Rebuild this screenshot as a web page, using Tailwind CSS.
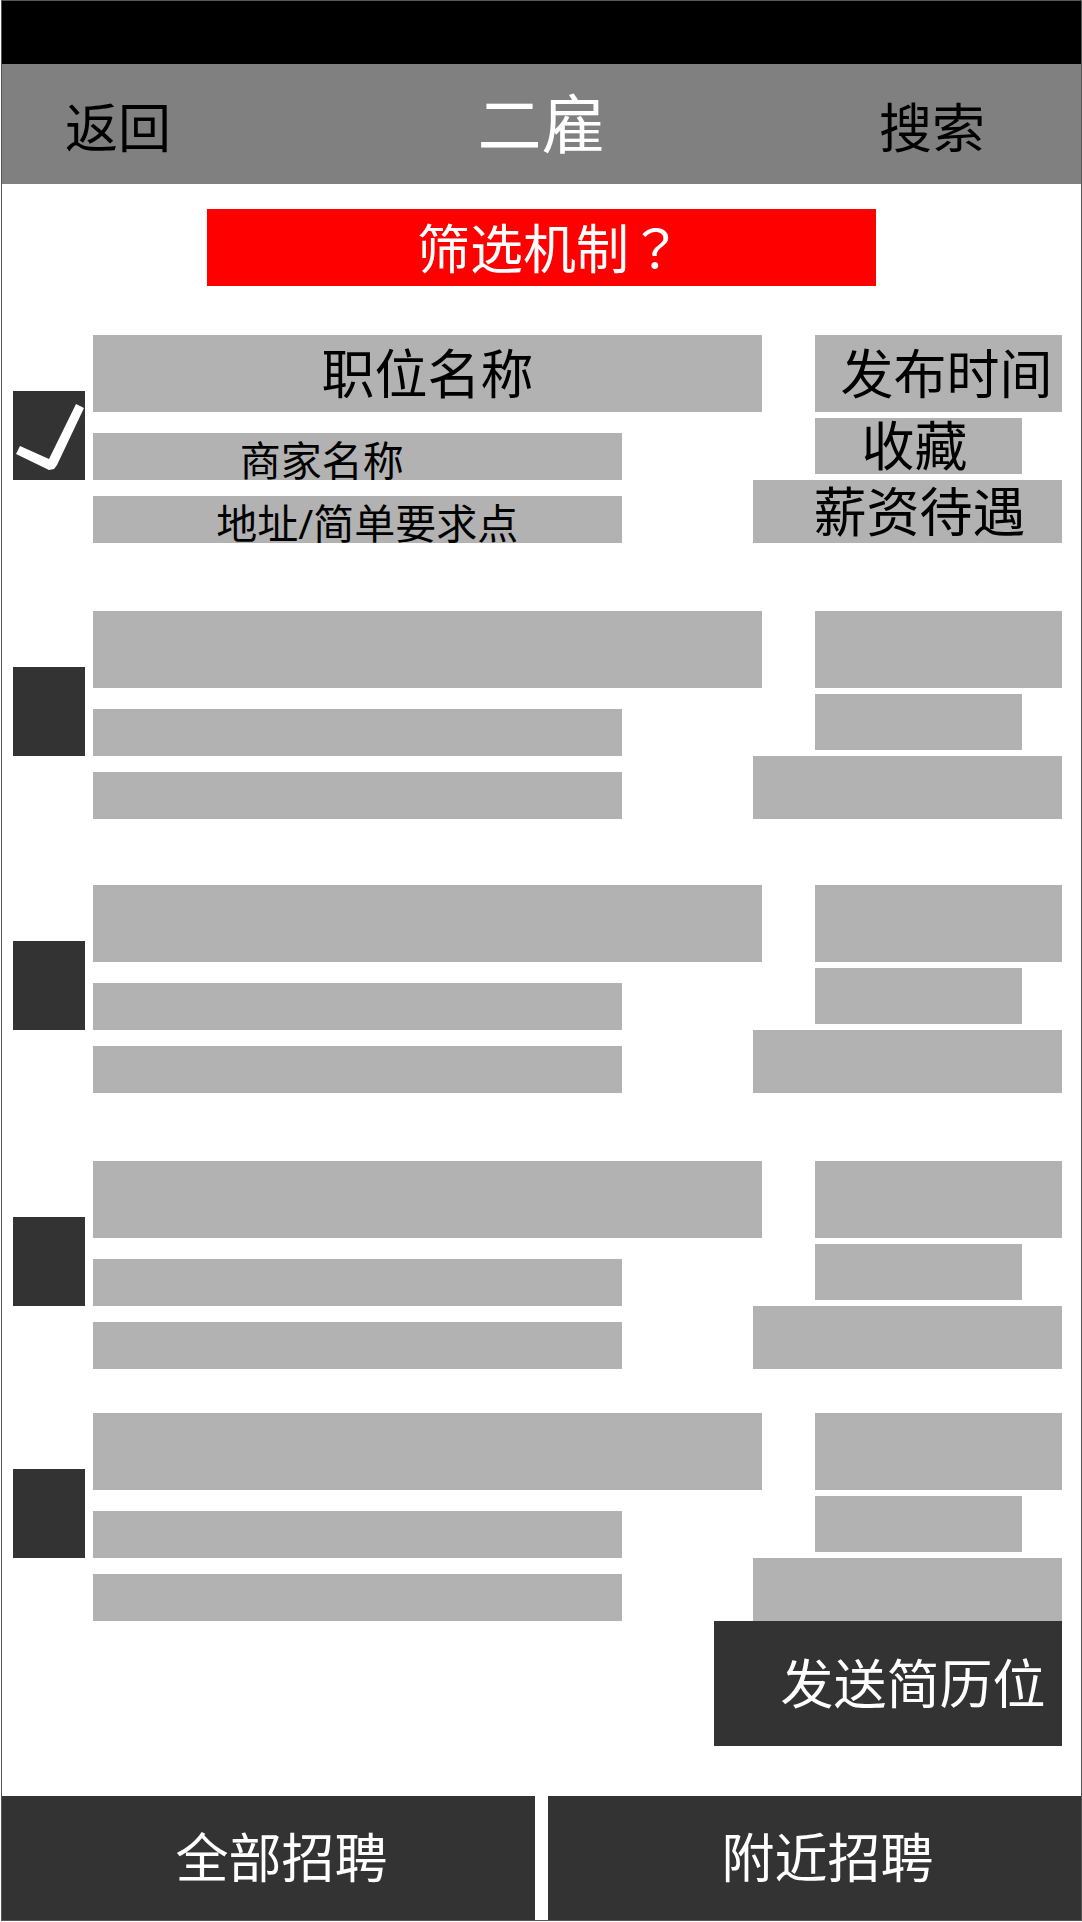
<!DOCTYPE html>
<html lang="zh-CN">
<head>
<meta charset="utf-8">
<meta name="viewport" content="width=device-width, initial-scale=1">
<title>二雇</title>
<script src="https://cdn.jsdelivr.net/npm/@tailwindcss/browser@4"></script>
</head>
<body class="bg-white text-black font-['Open_Sans','Noto_Sans_CJK_SC',sans-serif] text-[53px] leading-[64px]">
<div class="ml-px mb-px min-h-[calc(100vh-1px)] flex flex-col border border-[#555]">
  <div class="h-[63px] bg-black"></div>
  <header class="h-[120px] bg-[#808080] grid grid-cols-[1fr_auto_1fr] items-center">
    <a href="#" class="justify-self-start pl-[63px] pt-2">返回</a>
    <h1 class="text-white text-[64px]">二雇</h1>
    <a href="#" class="justify-self-end pr-24 pt-2">搜索</a>
  </header>

  <main class="flex-1 flex flex-col">
    <button type="button" class="mt-[25px] mx-auto w-[62%] h-[77px] pl-4 bg-[#f00] text-white">筛选机制<span class="font-['Noto_Sans_CJK_TC',sans-serif]" lang="zh-TW">？</span></button>

    <ul class="mt-[49px] pl-[11px] pr-[19px] whitespace-nowrap">
      <li class="flex mb-[68px]">
        <label class="relative mt-14 mr-2 w-[72px] h-[89px] shrink-0">
          <input type="checkbox" checked aria-label="选择职位 1" class="peer block appearance-none size-full bg-[#333]">
          <svg class="absolute inset-0 pointer-events-none hidden peer-checked:block" width="72" height="89" viewBox="0 0 72 89" fill="#fff"><path d="M7 55 3 63 36 79 41 78 44 74 71 17 63 13 36 68Z"/></svg>
        </label>
        <div class="flex-1 min-w-0">
          <h2 class="h-[77px] bg-[#b2b2b2] flex items-center justify-center">职位名称</h2>
          <p class="mt-[21px] w-[79%] h-[47px] pr-[71px] bg-[#b2b2b2] text-[41px] leading-[54px] text-center">商家名称</p>
          <p class="mt-4 w-[79%] h-[47px] pl-5 bg-[#b2b2b2] text-[41px] leading-[54px] text-center">地址/简单要求点</p>
        </div>
        <div class="ml-[53px] w-[247px] shrink-0 flex flex-col">
          <p class="h-[77px] pl-4 bg-[#b2b2b2] flex items-center justify-center">发布时间</p>
          <button type="button" class="mt-1.5 mr-10 h-14 pr-2 bg-[#b2b2b2] flex items-center justify-center">收藏</button>
          <p class="mt-1.5 -ml-[62px] h-[63px] pl-6 bg-[#b2b2b2] flex items-center justify-center">薪资待遇</p>
        </div>
      </li>
      <li class="flex mb-[66px]">
        <label class="relative mt-14 mr-2 w-[72px] h-[89px] shrink-0">
          <input type="checkbox" aria-label="选择职位 2" class="peer block appearance-none size-full bg-[#333]">
          <svg class="absolute inset-0 pointer-events-none hidden peer-checked:block" width="72" height="89" viewBox="0 0 72 89" fill="#fff"><path d="M7 55 3 63 36 79 41 78 44 74 71 17 63 13 36 68Z"/></svg>
        </label>
        <div class="flex-1 min-w-0">
          <div class="h-[77px] bg-[#b2b2b2]"></div>
          <div class="mt-[21px] w-[79%] h-[47px] bg-[#b2b2b2]"></div>
          <div class="mt-4 w-[79%] h-[47px] bg-[#b2b2b2]"></div>
        </div>
        <div class="ml-[53px] w-[247px] shrink-0 flex flex-col">
          <div class="h-[77px] bg-[#b2b2b2]"></div>
          <div class="mt-1.5 mr-10 h-14 bg-[#b2b2b2]"></div>
          <div class="mt-1.5 -ml-[62px] h-[63px] bg-[#b2b2b2]"></div>
        </div>
      </li>
      <li class="flex mb-[68px]">
        <label class="relative mt-14 mr-2 w-[72px] h-[89px] shrink-0">
          <input type="checkbox" aria-label="选择职位 3" class="peer block appearance-none size-full bg-[#333]">
          <svg class="absolute inset-0 pointer-events-none hidden peer-checked:block" width="72" height="89" viewBox="0 0 72 89" fill="#fff"><path d="M7 55 3 63 36 79 41 78 44 74 71 17 63 13 36 68Z"/></svg>
        </label>
        <div class="flex-1 min-w-0">
          <div class="h-[77px] bg-[#b2b2b2]"></div>
          <div class="mt-[21px] w-[79%] h-[47px] bg-[#b2b2b2]"></div>
          <div class="mt-4 w-[79%] h-[47px] bg-[#b2b2b2]"></div>
        </div>
        <div class="ml-[53px] w-[247px] shrink-0 flex flex-col">
          <div class="h-[77px] bg-[#b2b2b2]"></div>
          <div class="mt-1.5 mr-10 h-14 bg-[#b2b2b2]"></div>
          <div class="mt-1.5 -ml-[62px] h-[63px] bg-[#b2b2b2]"></div>
        </div>
      </li>
      <li class="flex mb-11">
        <label class="relative mt-14 mr-2 w-[72px] h-[89px] shrink-0">
          <input type="checkbox" aria-label="选择职位 4" class="peer block appearance-none size-full bg-[#333]">
          <svg class="absolute inset-0 pointer-events-none hidden peer-checked:block" width="72" height="89" viewBox="0 0 72 89" fill="#fff"><path d="M7 55 3 63 36 79 41 78 44 74 71 17 63 13 36 68Z"/></svg>
        </label>
        <div class="flex-1 min-w-0">
          <div class="h-[77px] bg-[#b2b2b2]"></div>
          <div class="mt-[21px] w-[79%] h-[47px] bg-[#b2b2b2]"></div>
          <div class="mt-4 w-[79%] h-[47px] bg-[#b2b2b2]"></div>
        </div>
        <div class="ml-[53px] w-[247px] shrink-0 flex flex-col">
          <div class="h-[77px] bg-[#b2b2b2]"></div>
          <div class="mt-1.5 mr-10 h-14 bg-[#b2b2b2]"></div>
          <div class="mt-1.5 -ml-[62px] h-[63px] bg-[#b2b2b2]"></div>
        </div>
      </li>
      <li class="flex">
        <label class="relative mt-14 mr-2 w-[72px] h-[89px] shrink-0">
          <input type="checkbox" aria-label="选择职位 5" class="peer block appearance-none size-full bg-[#333]">
          <svg class="absolute inset-0 pointer-events-none hidden peer-checked:block" width="72" height="89" viewBox="0 0 72 89" fill="#fff"><path d="M7 55 3 63 36 79 41 78 44 74 71 17 63 13 36 68Z"/></svg>
        </label>
        <div class="flex-1 min-w-0">
          <div class="h-[77px] bg-[#b2b2b2]"></div>
          <div class="mt-[21px] w-[79%] h-[47px] bg-[#b2b2b2]"></div>
          <div class="mt-4 w-[79%] h-[47px] bg-[#b2b2b2]"></div>
        </div>
        <div class="ml-[53px] w-[247px] shrink-0 flex flex-col">
          <div class="h-[77px] bg-[#b2b2b2]"></div>
          <div class="mt-1.5 mr-10 h-14 bg-[#b2b2b2]"></div>
          <div class="mt-1.5 -ml-[62px] h-[63px] bg-[#b2b2b2]"></div>
        </div>
      </li>
    </ul>

    <button type="button" class="self-end mr-[19px] w-[348px] h-[125px] pl-[50px] bg-[#333] text-white whitespace-nowrap">发送简历位</button>
  </main>

  <nav class="mt-[50px] h-[124px] grid grid-cols-2 gap-[13px] text-white">
    <a href="#" class="bg-[#333] pl-[26px] flex items-center justify-center">全部招聘</a>
    <a href="#" class="bg-[#333] pl-[26px] flex items-center justify-center">附近招聘</a>
  </nav>
</div>
</body>
</html>
